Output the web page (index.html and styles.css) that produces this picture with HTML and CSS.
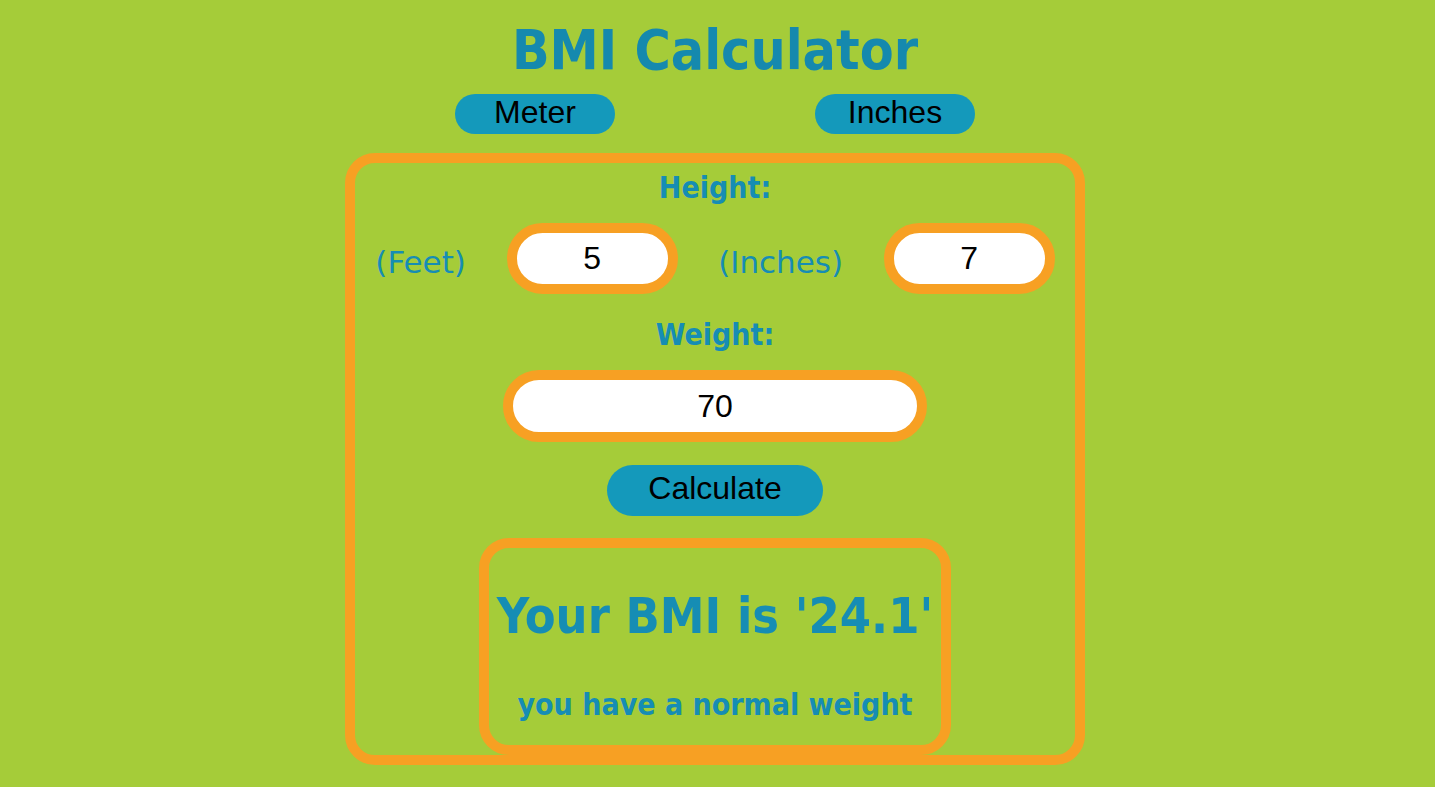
FILE: index.html
```html
<!DOCTYPE html>
<html lang="en">
<head>
<meta charset="utf-8">
<title>BMI Calculator</title>
<link rel="stylesheet" href="styles.css">
</head>
<body>
<div class="page">
  <h1 class="title">BMI Calculator</h1>
  <div class="units">
    <button class="pill unit-btn">Meter</button>
    <button class="pill unit-btn">Inches</button>
  </div>
  <div class="calc">
    <h2 class="label">Height:</h2>
    <div class="height-row">
      <span class="sub-label">(Feet)</span>
      <input class="field field-small" type="text" value="5">
      <span class="sub-label">(Inches)</span>
      <input class="field field-small" type="text" value="7">
    </div>
    <h2 class="label label-weight">Weight:</h2>
    <input class="field field-wide" type="text" value="70">
    <button class="pill calc-btn">Calculate</button>
    <div class="result">
      <h1 class="result-value">Your BMI is '24.1'</h1>
      <h2 class="result-text">you have a normal weight</h2>
    </div>
  </div>
</div>
</body>
</html>
```
FILE: styles.css
```css
html, body {
  margin: 0;
  padding: 0;
  background: #a5cc39;
}

.page {
  margin-right: 5px;
  display: flex;
  flex-direction: column;
  align-items: center;
  font-family: "DejaVu Sans Condensed", "DejaVu Sans", sans-serif;
  color: #168db4;
}

.title {
  margin: 18px 0 0;
  font-size: 55px;
  line-height: 64px;
  font-weight: bold;
  color: #1589ae;
  white-space: nowrap;
}

.units {
  margin-top: 12px;
  display: flex;
  gap: 200px;
}

.pill {
  border: none;
  background: #1499bb;
  color: #000;
  font-family: "Liberation Sans", Arial, sans-serif;
  font-size: 32px;
  padding: 0;
  margin: 0;
  cursor: pointer;
}

.unit-btn {
  width: 160px;
  height: 40px;
  line-height: 36px;
  padding-bottom: 4px;
  border-radius: 20px;
}

.calc {
  margin-top: 19px;
  width: 720px;
  border: 10px solid #f7a023;
  border-radius: 30px;
  display: flex;
  flex-direction: column;
  align-items: center;
}

.label {
  margin: 7px 0 0;
  font-size: 30px;
  line-height: 36px;
  font-weight: bold;
  white-space: nowrap;
}

.label-weight {
  margin-top: 23px;
}

.height-row {
  margin-top: 17px;
  width: 100%;
  display: flex;
  justify-content: space-around;
  align-items: center;
}

.sub-label {
  font-family: "DejaVu Sans", sans-serif;
  font-size: 31px;
  line-height: 36px;
  padding-top: 6px;
  white-space: nowrap;
}

.field {
  box-sizing: content-box;
  border: 10px solid #f7a023;
  border-radius: 36px;
  background: #fff;
  padding: 0;
  margin: 0;
  font-family: "Liberation Sans", Arial, sans-serif;
  font-size: 32px;
  color: #000;
  text-align: center;
  outline: none;
}

.field-small {
  width: 151px;
  height: 51px;
}

.field-wide {
  margin-top: 17px;
  width: 404px;
  height: 52px;
}

.calc-btn {
  margin-top: 23px;
  width: 216px;
  height: 51px;
  line-height: 47px;
  padding-bottom: 4px;
  border-radius: 26px;
}

.result {
  margin-top: 22px;
  width: 452px;
  height: 197px;
  box-sizing: content-box;
  border: 10px solid #f7a023;
  border-radius: 30px;
  display: flex;
  flex-direction: column;
  align-items: center;
}

.result-value {
  margin: 38px 0 0;
  font-size: 50px;
  line-height: 60px;
  font-weight: bold;
  white-space: nowrap;
}

.result-text {
  margin: 41px 0 0;
  font-size: 30px;
  line-height: 36px;
  font-weight: bold;
  white-space: nowrap;
}
```
